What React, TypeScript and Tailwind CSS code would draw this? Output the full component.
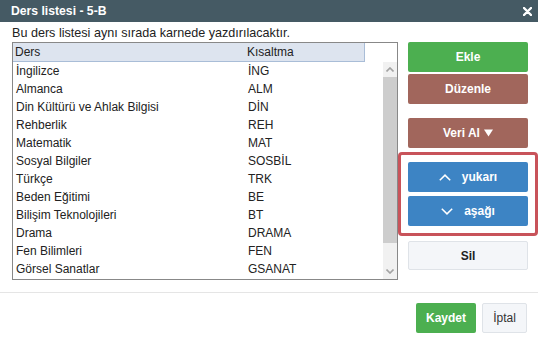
import React from "react";

const rows: [string, string][] = [
  ["İngilizce", "İNG"],
  ["Almanca", "ALM"],
  ["Din Kültürü ve Ahlak Bilgisi", "DİN"],
  ["Rehberlik", "REH"],
  ["Matematik", "MAT"],
  ["Sosyal Bilgiler", "SOSBİL"],
  ["Türkçe", "TRK"],
  ["Beden Eğitimi", "BE"],
  ["Bilişim Teknolojileri", "BT"],
  ["Drama", "DRAMA"],
  ["Fen Bilimleri", "FEN"],
  ["Görsel Sanatlar", "GSANAT"],
];

function Chevron({ up }: { up?: boolean }) {
  return (
    <svg width="12" height="7" viewBox="0 0 12 7" className="shrink-0">
      <path
        d={up ? "M0.8 6.3 L6 1.1 L11.2 6.3" : "M0.8 0.7 L6 5.9 L11.2 0.7"}
        fill="none"
        stroke="white"
        strokeWidth="1.5"
      />
    </svg>
  );
}

export default function App() {
  return (
    <div className="w-[538px] h-[343px] bg-white font-['Liberation_Sans',Arial,sans-serif] text-[12px] text-[#222] flex flex-col overflow-hidden">
      {/* Title bar */}
      <div className="h-[22px] bg-[#455a64] flex items-center justify-between pl-[11px] pr-[6px] shrink-0">
        <span className="text-white font-bold text-[12.2px]">Ders listesi - 5-B</span>
        <svg width="9" height="9" viewBox="0 0 9 9">
          <path d="M1 1 L8 8 M8 1 L1 8" stroke="white" strokeWidth="2.4" strokeLinecap="round" />
        </svg>
      </div>

      {/* Body */}
      <div className="flex pl-[12px] shrink-0">
        <div className="flex flex-col w-[386px]">
          <div className="h-[20px] leading-[20px] pt-px text-[12.6px] text-[#222]">
            Bu ders listesi aynı sırada karnede yazdırılacaktır.
          </div>
          <div className="h-[238px] border border-[#888] flex">
            <div className="flex-1 flex flex-col">
              <div className="h-[19px] w-[352px] bg-[#dde4ef] border-r border-b border-[#a9bdd7] flex items-center">
                <span className="w-[234px] pl-[2px]">Ders</span>
                <span>Kısaltma</span>
              </div>
              {rows.map(([a, b]) => (
                <div key={a} className="h-[18px] flex items-center">
                  <span className="w-[235px] pl-[3px]">{a}</span>
                  <span>{b}</span>
                </div>
              ))}
            </div>
            <div className="w-[14px] mt-[19px] flex flex-col bg-[#f1f1f1]">
              <div className="h-[15px] flex items-center justify-center">
                <svg width="8" height="5" viewBox="0 0 8 5">
                  <path d="M0.5 4.5 L4 1 L7.5 4.5" fill="none" stroke="#a3a3a3" strokeWidth="1.6" />
                </svg>
              </div>
              <div className="h-[166px] bg-[#cdcdcd]" />
              <div className="flex-1" />
              <div className="h-[15px] flex items-center justify-center">
                <svg width="8" height="5" viewBox="0 0 8 5">
                  <path d="M0.5 0.5 L4 4 L7.5 0.5" fill="none" stroke="#a3a3a3" strokeWidth="1.6" />
                </svg>
              </div>
            </div>
          </div>
        </div>

        {/* Right column */}
        <div className="w-[140px] mt-[20px] flex flex-col">
          <button className="ml-[10px] w-[120px] h-[30px] rounded-[2px] bg-[#4caf50] text-white font-bold">
            Ekle
          </button>
          <button className="ml-[10px] mt-[2px] w-[120px] h-[30px] rounded-[2px] bg-[#a1665c] text-white font-bold">
            Düzenle
          </button>
          <button className="ml-[10px] mt-[14px] w-[120px] h-[30px] rounded-[2px] bg-[#a1665c] text-white font-bold flex items-center justify-center gap-[4px]">
            <span>Veri Al</span>
            <svg width="9" height="8" viewBox="0 0 9 8" className="shrink-0">
              <path d="M0 0.5 L9 0.5 L4.5 7.5 Z" fill="white" />
            </svg>
          </button>
          <div className="mt-[4px] w-[140px] border-[3px] border-[#c8535a] rounded-[4px] p-[7px] flex flex-col gap-[4px]">
            <button className="w-[120px] h-[30px] rounded-[2px] bg-[#3d84c4] text-white font-bold flex items-center justify-center gap-[11px]">
              <Chevron up />
              <span>yukarı</span>
            </button>
            <button className="w-[120px] h-[30px] rounded-[2px] bg-[#3d84c4] text-white font-bold flex items-center justify-center gap-[11px]">
              <Chevron />
              <span>aşağı</span>
            </button>
          </div>
          <button className="ml-[10px] mt-[5px] w-[120px] h-[29px] rounded-[2px] bg-[#f4f6f9] border border-[#dfe3e8] text-[#222] font-bold">
            Sil
          </button>
        </div>
      </div>

      {/* Footer */}
      <div className="mt-[12px] border-t border-[#e5e5e5] flex justify-end gap-[6px] pt-[10px] pr-[11px]">
        <button className="w-[60px] h-[30px] rounded-[2px] bg-[#4caf50] text-white font-bold">Kaydet</button>
        <button className="w-[45px] h-[30px] rounded-[2px] bg-[#f4f6f9] border border-[#dfe3e8] text-[#333]">
          İptal
        </button>
      </div>
    </div>
  );
}
